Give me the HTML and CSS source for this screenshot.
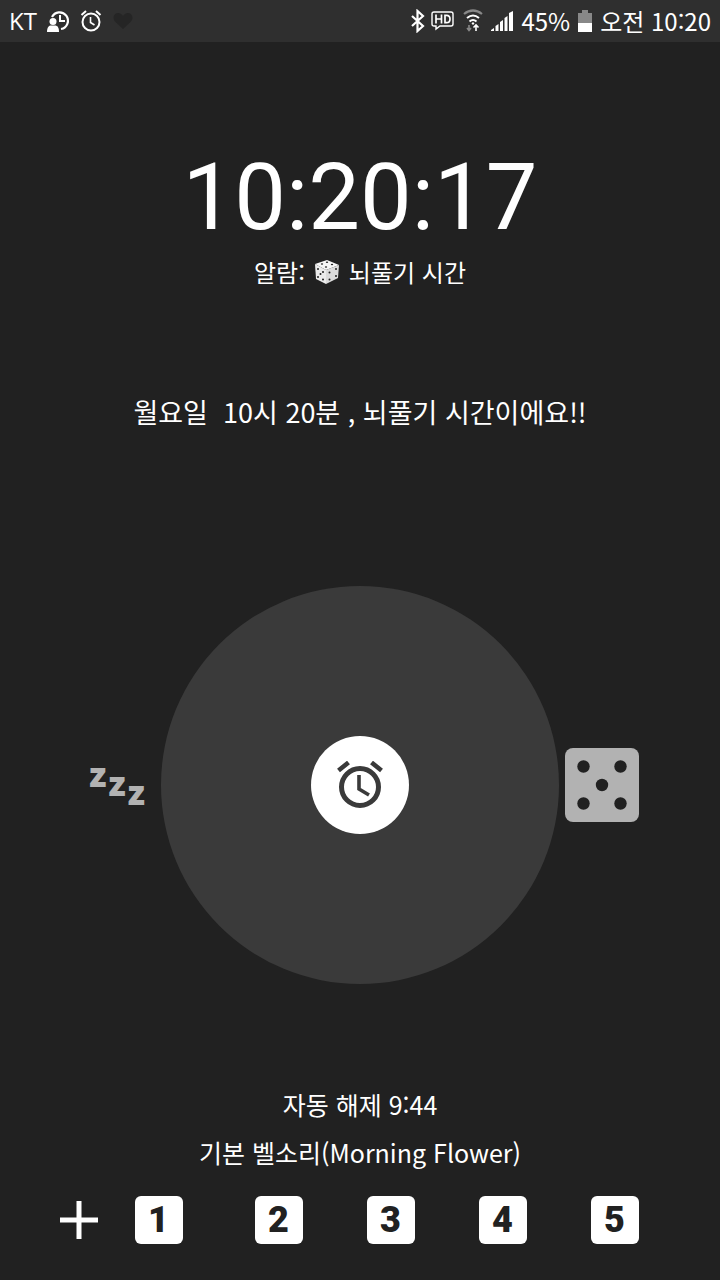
FILE: index.html
```html
<!DOCTYPE html>
<html lang="ko">
<head>
<meta charset="utf-8">
<meta name="viewport" content="width=device-width, initial-scale=1">
<title>알람</title>
<link rel="stylesheet" href="styles.css">
</head>
<body>
<header class="status">
  <div class="status-left">
    <span class="carrier">KT</span>
    <svg class="ic-contact" viewBox="0 0 24 24" width="24" height="24"><path d="M5 8A8.400 8.400 0 1 1 14 20" fill="none" stroke="#fff" stroke-width="2.200"/><path d="M13 6v6h5" fill="none" stroke="#fff" stroke-width="2"/><circle cx="6" cy="12.500" r="3.500" fill="#fff"/><path d="M0 23c0-5 2-6.500 4-6.500h4c2.500 0 4 2 4 6.500z" fill="#fff"/></svg>
    <svg viewBox="0 0 24 24" width="24" height="24" fill="none" stroke="#fff"><circle cx="12" cy="13" r="8.500" stroke-width="2"/><path d="M2.500 6L7 2M21.500 6L17 2" stroke-width="2"/><path d="M11.500 8v5.500l4 2.500" stroke-width="1.600"/></svg>
    <svg class="ic-heart" viewBox="0 0 20 18" width="20" height="18"><path d="M10 17L2 9.500C-1 6 1 1 5 1c2.500 0 4 1.500 5 3 1-1.500 2.500-3 5-3 4 0 6 5 3 8.500z" fill="#252525"/></svg>
  </div>
  <div class="status-right">
    <svg class="ic-bluetooth" viewBox="0 0 16 24" width="16" height="24"><path d="M2 7l11 10-5.500 5V2L13 7 2 17" fill="none" stroke="#fff" stroke-width="2.200"/></svg>
    <svg viewBox="0 0 24 22" width="24" height="22"><path d="M3 2h17q2 0 2 2v10q0 2-2 2H9l-4 3v-3H3q-2 0-2-2V4q0-2 2-2z" fill="none" stroke="#fff" stroke-width="1.400"/><path d="M5 4.500v9M10.500 4.500v9M5 9h5.500M14 5.300h1.500q3.500 0 3.500 3.700t-3.500 3.700H14z" fill="none" stroke="#fff" stroke-width="1.700"/></svg>
    <svg viewBox="0 0 20 24" width="20" height="24"><path d="M1 5q9-7 18 0" fill="none" stroke="#888" stroke-width="2.200"/><path d="M4 9q6-5 12 0M6.500 12.500q3.500-3 7 0" fill="none" stroke="#fff" stroke-width="2"/><path d="M10 13l1.500 1.500L10 16l-1.500-1.500z" fill="#fff"/><path d="M6 16v5M4 19l2 2.500L8 19" fill="none" stroke="#888" stroke-width="1.600"/><path d="M13 22v-5M10.500 18.500L13 16l2.500 2.500" fill="none" stroke="#fff" stroke-width="1.600"/></svg>
    <svg viewBox="0 0 22 22" width="22" height="22" fill="#fff"><path d="M0 21v-1l3-2v3zM4.500 21v-5l3-2v7zM9 21v-9l3-2v11zM13.500 21V8l3-2v15zM18 21V3l4-2v20z"/></svg>
    <span>45%</span>
    <svg viewBox="0 0 14 22" width="14" height="22"><path d="M0 3h4V0h6v3h4v10H0z" fill="#888"/><path d="M0 13h14v9H0z" fill="#fff"/></svg>
    <span>오전 10:20</span>
  </div>
</header>
<main class="alarm">
  <h1 class="clock">10:20:17</h1>
  <p class="label"><span>알람:</span>
    <svg viewBox="0 0 26 26" width="26" height="26"><path d="M13 1L25 6 12 11 1 5z" fill="#f7f7f7"/><path d="M1 5l11 6v14L2 20z" fill="#ececec"/><path d="M25 6L12 11v14l12-6z" fill="#dcdcdc"/><g fill="#222"><ellipse cx="8" cy="5" rx="1.200" ry=".7"/><ellipse cx="13" cy="3.200" rx="1.200" ry=".7"/><ellipse cx="12" cy="8" rx="1.200" ry=".7"/><ellipse cx="18" cy="5.500" rx="1.200" ry=".7"/><circle cx="4" cy="10" r="1"/><circle cx="9" cy="13" r="1"/><circle cx="6.500" cy="15" r="1"/><circle cx="4" cy="18" r="1"/><circle cx="9" cy="20.500" r="1"/><circle cx="15.500" cy="13.500" r="1"/><circle cx="22" cy="10" r="1"/><circle cx="15.500" cy="20.500" r="1"/><circle cx="22" cy="17" r="1"/></g></svg>
    <span>뇌풀기 시간</span></p>
  <p class="message">월요일  10시 20분 , 뇌풀기 시간이에요!!</p>
  <div class="dial-row">
    <button class="snooze" aria-label="다시 알림"><span>z</span><span>z</span><span>z</span></button>
    <div class="dial">
      <button class="handle" aria-label="알람">
        <svg viewBox="0 0 48 48" width="48" height="48" fill="none" stroke="#3a3a3a"><circle cx="24" cy="26" r="18.500" stroke-width="5"/><path d="M2.500 9.500l10-8M45.500 9.500l-10-8" stroke-width="4.600"/><path d="M23 14v14l10 6" stroke-width="3.600"/></svg>
      </button>
    </div>
    <button class="dismiss" aria-label="해제">
      <svg viewBox="0 0 74 74" width="74" height="74"><rect width="74" height="74" rx="8" fill="#b2b2b2"/><g fill="#212121"><circle cx="18.500" cy="18.500" r="6.200"/><circle cx="55.500" cy="18.500" r="6.200"/><circle cx="37" cy="37" r="6.200"/><circle cx="18.500" cy="55.500" r="6.200"/><circle cx="55.500" cy="55.500" r="6.200"/></g></svg>
    </button>
  </div>
  <p class="auto">자동 해제 9:44</p>
  <p class="ringtone">기본 벨소리(Morning Flower)</p>
  <div class="extend">
    <svg viewBox="0 0 38 38" width="38" height="38"><path d="M19 0v38M0 19h38" stroke="#fff" stroke-width="5"/></svg>
    <button class="num first">1</button>
    <button class="num">2</button>
    <button class="num">3</button>
    <button class="num">4</button>
    <button class="num">5</button>
  </div>
</main>
</body>
</html>
```
FILE: styles.css
```css
* {
  box-sizing: border-box;
}

body {
  margin: 0;
  min-height: 100vh;
  display: flex;
  flex-direction: column;
  background: #212121;
  color: #fff;
  font-family: "Noto Sans CJK KR", sans-serif;
}

button {
  border: 0;
  padding: 0;
  background: none;
  color: inherit;
}

h1,
p {
  margin: 0;
  font-weight: 400;
}

.status {
  display: flex;
  justify-content: space-between;
  align-items: center;
  height: 42px;
  padding: 0 9px;
  background: #2f2f2f;
  font-size: 24px;
  line-height: 40px;
}

.status-left,
.status-right {
  display: flex;
  align-items: center;
  gap: 8px;
}

.ic-heart {
  margin-left: 2px;
}

.ic-bluetooth {
  margin-right: -3px;
}

.carrier {
  font-family: "Open Sans", sans-serif;
  font-size: 24px;
  margin-right: 2px;
}

.alarm {
  flex: 1;
  display: flex;
  flex-direction: column;
  align-items: center;
  text-align: center;
  padding-top: 106px;
}

.clock {
  font-family: Roboto, sans-serif;
  font-size: 92px;
  line-height: 100px;
}

.label {
  display: flex;
  align-items: center;
  gap: 9px;
  margin-top: 6px;
  font-size: 24px;
  line-height: 36px;
}

.message {
  margin-top: 104px;
  font-size: 27px;
  line-height: 36px;
  white-space: pre-wrap;
}

.dial-row {
  align-self: stretch;
  display: grid;
  grid-template-columns: 1fr 398px 1fr;
  align-items: center;
  margin-top: 156px;
}

.dial {
  display: grid;
  place-items: center;
  aspect-ratio: 1;
  border-radius: 50%;
  background: #3a3a3a;
}

.handle {
  display: grid;
  place-items: center;
  width: 98px;
  height: 98px;
  border-radius: 50%;
  background: #fff;
}

.snooze {
  justify-self: end;
  display: flex;
  gap: 2px;
  margin-right: 16px;
  padding-bottom: 4px;
  color: #b2b2b2;
  font: 900 34px/20px "Open Sans", sans-serif;
}

.snooze span:nth-child(2) {
  padding-top: 9px;
}

.snooze span:nth-child(3) {
  padding-top: 18px;
}

.dismiss {
  justify-self: start;
  display: flex;
  margin-left: 6px;
}

.auto,
.ringtone {
  font-size: 25px;
  line-height: 48px;
}

.auto {
  margin-top: 96px;
}

.extend {
  display: flex;
  align-items: center;
  gap: 64px;
  margin-top: 20px;
  padding-right: 22px;
}

.num {
  width: 48px;
  height: 48px;
  border-radius: 6px;
  background: #fff;
  color: #212121;
  font: 900 36px/48px Roboto, sans-serif;
}

.num.first {
  margin-left: -27px;
  margin-right: 8px;
}
```
